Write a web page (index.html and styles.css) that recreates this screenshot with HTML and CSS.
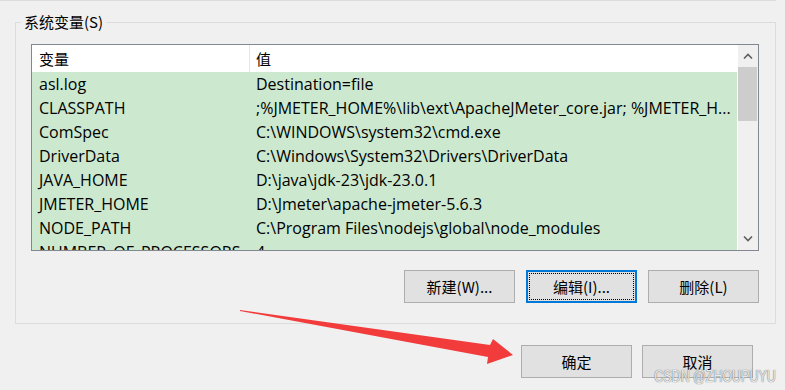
FILE: index.html
```html
<!DOCTYPE html>
<html lang="zh">
<head>
  <meta charset="utf-8" />
  <title>系统变量</title>
  <link rel="stylesheet" href="styles.css">
</head>
<body>
  <div class="prev-box"></div>
  <fieldset class="group">
    <legend>系统变量(S)</legend>
    <div class="group-body">
      <div class="var-list">
        <div class="var-table">
          <div class="row head">
            <div class="col-name">变量</div>
            <div class="col-value">值</div>
          </div>
          <div class="row">
            <div class="col-name">asl.log</div>
            <div class="col-value">Destination=file</div>
          </div>
          <div class="row">
            <div class="col-name">CLASSPATH</div>
            <div class="col-value">;%JMETER_HOME%\lib\ext\ApacheJMeter_core.jar; %JMETER_H...</div>
          </div>
          <div class="row">
            <div class="col-name">ComSpec</div>
            <div class="col-value">C:\WINDOWS\system32\cmd.exe</div>
          </div>
          <div class="row">
            <div class="col-name">DriverData</div>
            <div class="col-value">C:\Windows\System32\Drivers\DriverData</div>
          </div>
          <div class="row">
            <div class="col-name">JAVA_HOME</div>
            <div class="col-value">D:\java\jdk-23\jdk-23.0.1</div>
          </div>
          <div class="row">
            <div class="col-name">JMETER_HOME</div>
            <div class="col-value">D:\Jmeter\apache-jmeter-5.6.3</div>
          </div>
          <div class="row">
            <div class="col-name">NODE_PATH</div>
            <div class="col-value">C:\Program Files\nodejs\global\node_modules</div>
          </div>
          <div class="row">
            <div class="col-name">NUMBER_OF_PROCESSORS</div>
            <div class="col-value">4</div>
          </div>
        </div>
        <div class="scrollbar">
          <div class="sb-btn">
            <svg width="10" height="6" viewBox="0 0 10 6"><path d="M1 5.5 L5 1.5 L9 5.5" fill="none" stroke="#606060" stroke-width="1.6"/></svg>
          </div>
          <div class="sb-thumb"></div>
          <div class="sb-track"></div>
          <div class="sb-btn">
            <svg width="10" height="6" viewBox="0 0 10 6"><path d="M1 0.5 L5 4.5 L9 0.5" fill="none" stroke="#606060" stroke-width="1.6"/></svg>
          </div>
        </div>
      </div>
      <div class="actions">
        <button class="btn">新建(W)...</button>
        <button class="btn focused">编辑(I)...</button>
        <button class="btn">删除(L)</button>
      </div>
    </div>
  </fieldset>
  <div class="dialog-actions">
    <button class="btn">确定</button>
    <button class="btn">取消</button>
  </div>

  <!-- 标注箭头 -->
  <svg class="arrow" width="785" height="390" viewBox="0 0 785 390">
    <polygon points="240,310 490,345 493,339 513,355 487,364 488,357 240,311" fill="#f23c3c"/>
  </svg>
  <div class="watermark">CSDN @ZHOUPUYU</div>
</body>
</html>
```

FILE: styles.css
```css
body {
  margin: 0;
  width: 785px;
  height: 390px;
  overflow: hidden;
  position: relative;
  background: #f0f0f0;
  font-family: "Open Sans", "Noto Sans CJK SC", sans-serif;
  font-size: 15px;
  color: #000;
}
.prev-box {
  height: 1px;
  margin-right: 9px;
  background: #dcdcdc;
}
.group {
  margin: 11px 9px 0 15px;
  padding: 0;
  border: 1px solid #dcdcdc;
  min-width: 0;
}
.group legend {
  margin-left: 5px;
  padding: 0 3px;
  line-height: 20px;
  font-family: "Noto Sans CJK SC", sans-serif;
}
.group-body {
  padding: 12px 16px 20px 15px;
}
.var-list {
  display: flex;
  height: 205px;
  border: 1px solid #828790;
  background: #fff;
}
.var-table {
  flex: 1;
  overflow: hidden;
}
.row {
  display: flex;
  height: 24px;
  line-height: 24px;
  font-size: 16px;
  background: #cce8cf;
  white-space: nowrap;
}
.row.head {
  height: 27px;
  line-height: 28px;
  font-size: 15px;
  background: #fff;
}
.col-name {
  width: 211px;
  padding-left: 7px;
  flex-shrink: 0;
  overflow: hidden;
}
.row.head .col-name {
  width: 210px;
  border-right: 1px solid #e5e5e5;
}
.col-value {
  padding-left: 6px;
  overflow: hidden;
}
.scrollbar {
  width: 20px;
  border-left: 1px solid #fff;
  background: #f0f0f0;
  display: flex;
  flex-direction: column;
}
.sb-btn {
  height: 22px;
  display: flex;
  align-items: center;
  justify-content: center;
}
.sb-thumb {
  height: 54px;
  margin-right: 1px;
  background: #cdcdcd;
}
.sb-track {
  flex: 1;
}
.actions {
  display: flex;
  justify-content: flex-end;
  gap: 11px;
  margin-top: 19px;
}
.btn {
  width: 111px;
  height: 33px;
  padding: 0;
  background: #e1e1e1;
  border: 1px solid #adadad;
  font-family: "Noto Sans CJK SC", sans-serif;
  font-size: 15px;
  color: #000;
}
.btn.focused {
  border: 2px solid #0078d7;
  outline: 1px dotted #000;
  outline-offset: -4px;
}
.dialog-actions {
  display: flex;
  justify-content: flex-end;
  gap: 10px;
  margin: 21px 32px 0 0;
}
.arrow {
  position: absolute;
  left: 0;
  top: 0;
  pointer-events: none;
}
.watermark {
  position: absolute;
  right: 9px;
  bottom: 4px;
  font-family: "Liberation Sans", sans-serif;
  font-size: 16px;
  color: rgba(255, 255, 255, 0.85);
  text-shadow: 0 0 1px #777, 0 0 1px #777;
  transform: scaleX(0.78);
  transform-origin: right center;
}
```
